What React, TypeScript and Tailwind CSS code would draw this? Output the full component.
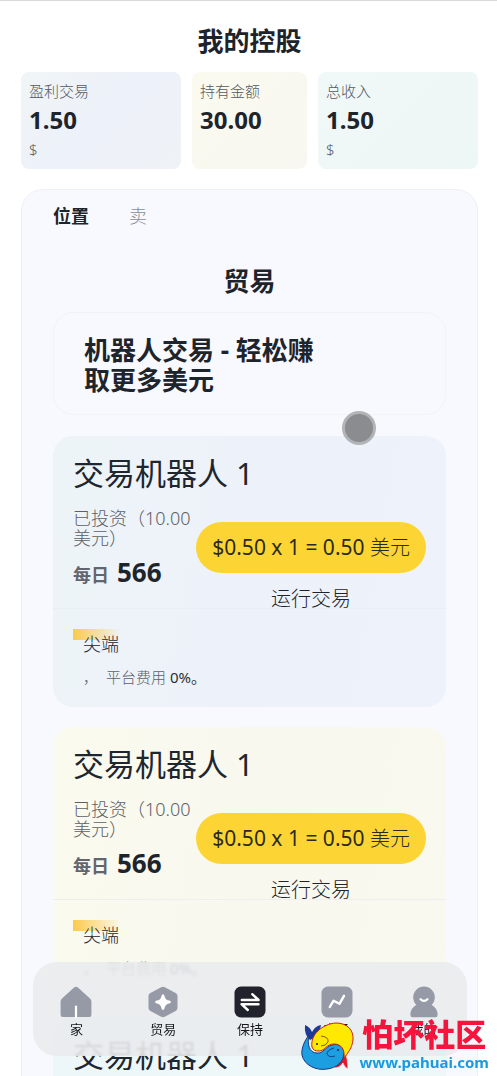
import React, { useState } from 'react';

type Stat = { label: string; value: string; unit?: string; className: string };

const stats: Stat[] = [
  { label: '盈利交易', value: '1.50', unit: '$', className: 'bg-[linear-gradient(135deg,#f0f5f7,#edf1f9_50%,#eff2f6)]' },
  { label: '持有金额', value: '30.00', className: 'bg-[linear-gradient(135deg,#fbfaef,#f8f7f1)]' },
  { label: '总收入', value: '1.50', unit: '$', className: 'bg-[linear-gradient(135deg,#f0f8f8,#edf7f5)]' },
];

const bots = [
  { id: 1, className: 'bg-[linear-gradient(100deg,#edf4f7,#edf2fa_50%,#eef2fb)]' },
  { id: 2, className: 'bg-[linear-gradient(100deg,#fafaee,#f8f8ef_50%,#f9f9f0)]' },
  { id: 3, className: 'bg-[linear-gradient(100deg,#edf7fa,#eff8f8)]' },
];

function StatCard({ label, value, unit, className }: Stat) {
  return (
    <div className={`min-w-0 rounded-lg px-2 pt-[7px] pb-2 ${className}`}>
      <p className="text-[15px] leading-6 font-light text-[#54585f]">{label}</p>
      <p className="text-2xl leading-[34px] font-bold text-[#1e242c]">{value}</p>
      {unit && <p className="text-[15px] leading-6 font-light text-[#54585f]">{unit}</p>}
    </div>
  );
}

function BotCard({ className }: { className: string }) {
  return (
    <article className={`rounded-[20px] ${className}`}>
      <div className="border-b border-[#e9ecf0]/80 px-5 pt-4">
        <h3 className="text-[31px] leading-[42px] text-[#20262f]">交易机器人 1</h3>
        <div className="flex h-[114px] items-start">
          <div className="min-w-0 flex-1 pt-3.5">
            <p className="text-lg leading-5 font-light text-[#5c6068]">已投资（10.00美元）</p>
            <p className="flex items-baseline gap-2 pt-1.5 leading-9 font-bold">
              <span className="text-lg text-[#62656e]">每日</span>
              <span className="text-[26px] text-[#1e242c]">566</span>
            </p>
          </div>
          <div className="flex flex-none flex-col items-center pt-7">
            <button type="button" className="h-[51px] rounded-full bg-[#fcd535] px-4 text-[21px] leading-none whitespace-nowrap text-[#2b2a1e]">
              $0.50 x 1 = 0.50 <span className="text-xl font-light">美元</span>
            </button>
            <button type="button" className="pt-3 text-xl leading-7 font-light text-[#1e242c]">运行交易</button>
          </div>
        </div>
      </div>
      <div className="px-5 pt-5 pb-5">
        <div className="h-[11px] w-12 bg-linear-to-r from-[#fcca4c] to-transparent" />
        <div className="-mt-2 pl-2.5">
          <p className="text-lg leading-6 font-light text-[#1e242c]">尖端</p>
          <p className="pt-[11px] text-[15px] leading-5 font-light text-[#5c6068]">
            ，<span className="pl-2">平台费用</span> <span className="font-normal text-[#2a3038]">0%。</span>
          </p>
        </div>
      </div>
    </article>
  );
}

function HomeIcon() {
  return (
    <svg viewBox="0 0 32 32" className="size-8" aria-hidden="true">
      <path d="M13.800 1.700a3.400 3.400 0 0 1 4.400 0L30 12.400q1.400 1.300 1.400 3V29a2 2 0 0 1-2 2H2.600a2 2 0 0 1-2-2V15.400q0-1.700 1.400-3z" fill="#959aa6" />
      <path d="M16 20.500V31" stroke="#fff" strokeWidth="2.200" strokeLinecap="round" />
    </svg>
  );
}

function TradeIcon() {
  return (
    <svg viewBox="0 0 32 32" className="size-8" aria-hidden="true">
      <path d="M14.200 1.300a4 4 0 0 1 3.600 0l10.800 5.600a3.500 3.500 0 0 1 1.900 3.100v12a3.500 3.500 0 0 1-1.900 3.100l-10.800 5.600a4 4 0 0 1-3.600 0L3.400 25.100A3.500 3.500 0 0 1 1.500 22V10a3.500 3.500 0 0 1 1.900-3.100z" fill="#959aa6" />
      <path d="M16 8.200q1.200 0 1.500 1.700.7 4 4.700 4.700 1.700.3 1.700 1.500t-1.700 1.500q-4 .7-4.700 4.700-.3 1.700-1.500 1.700t-1.500-1.700q-.7-4-4.700-4.700-1.700-.3-1.700-1.500t1.700-1.500q4-.7 4.700-4.700.3-1.700 1.500-1.700z" fill="#fff" />
    </svg>
  );
}

function HoldIcon() {
  return (
    <svg viewBox="0 0 32 32" className="size-8" aria-hidden="true">
      <rect x=".5" y=".5" width="31" height="31" rx="6.500" fill="#20232b" />
      <path d="M7.800 14h16.800L18.200 8.200M24.500 18.200H7.500l6.300 5.800" fill="none" stroke="#fff" strokeWidth="2.400" strokeLinecap="round" strokeLinejoin="round" />
    </svg>
  );
}

function MarketIcon() {
  return (
    <svg viewBox="0 0 32 32" className="size-8" aria-hidden="true">
      <rect x=".5" y=".5" width="31" height="31" rx="6.500" fill="#959aa6" />
      <path d="M8.800 21 12.600 14.700 18.400 17.800 23 9.800" fill="none" stroke="#fff" strokeWidth="2.400" strokeLinecap="round" strokeLinejoin="round" />
    </svg>
  );
}

function ProfileIcon() {
  return (
    <svg viewBox="0 0 32 32" className="size-8" aria-hidden="true">
      <circle cx="16" cy="11.300" r="10.800" fill="#959aa6" />
      <path d="M9 18.500q7 6 14 0 6.600 3.500 6.600 10.200 0 2.500-2 2.500H4.400q-2 0-2-2.500 0-6.700 6.600-10.200z" fill="#959aa6" />
      <path d="M12.500 13.200q3.500 3.200 7 0" fill="none" stroke="#fff" strokeWidth="2.200" strokeLinecap="round" />
    </svg>
  );
}

const navItems = [
  { label: '家', Icon: HomeIcon },
  { label: '贸易', Icon: TradeIcon },
  { label: '保持', Icon: HoldIcon },
  { label: '市场', Icon: MarketIcon },
  { label: '我的', Icon: ProfileIcon },
];

function FishLogo() {
  return (
    <svg viewBox="0 0 54 50" className="h-[50px] w-[54px] flex-none" aria-hidden="true">
      <path d="M9 18Q3 13 4 3q5 2 7 7 3-6 9-7-1 8-7 13z" fill="#1d3a98" />
      <path d="M44 30q3 7 3 17-4-2-5-6-3 5-9 5 6-5 8-13z" fill="#e5182b" stroke="#fff" strokeWidth=".6" />
      <path d="M8 13C4 18 0 26 1 33c2 10 14 16 25 14 9-1 17-7 17-16 0-6-6-10-12-8-7 2-9 9-15 8-8 0-10-9-8-18z" fill="#1c9fe0" stroke="#18357e" strokeWidth="1" />
      <path d="M11 25C9 13 21 2 35 1c11 0 18 7 17 17-1 8-5 13-9 18 1-9-3-14-10-14-8 0-9 7-15 7-4 0-6-1-7-4z" fill="#ffe900" stroke="#c4201f" strokeWidth="1" />
      <path d="M20 14q8 1 7 6-2 4-7 4" fill="none" stroke="#8a3b20" strokeWidth=".9" />
      <path d="M33 26q-7 2-7 6 2 4 8 2" fill="none" stroke="#18357e" strokeWidth=".9" />
      <circle cx="16" cy="22" r="1" fill="#222" />
      <circle cx="37" cy="28" r="1" fill="#123" />
    </svg>
  );
}

export default function App() {
  const [tab, setTab] = useState('位置');
  const [page, setPage] = useState('保持');

  return (
    <div className="relative h-dvh overflow-hidden border-t border-[#d9d9d9] bg-white font-['Noto_Sans','Noto_Sans_CJK_SC',sans-serif]">
      <main className="h-full overflow-y-auto pt-5 pr-[19px] pl-[21px] [scrollbar-width:none]">
        <h1 className="text-center text-[26px] leading-10 font-bold text-[#1d232b]">我的控股</h1>
        <section className="mt-[11px] grid h-24 grid-cols-[160fr_115fr_160fr] gap-[11px]">
          {stats.map((s) => <StatCard key={s.label} {...s} />)}
        </section>

        <section className="mt-[21px] rounded-t-[22px] border border-[#eef0f4] bg-[#f8f9fe] px-[31px] pt-3 pb-32">
          <div className="flex gap-10">
            {['位置', '卖'].map((t) => (
              <button
                key={t}
                type="button"
                onClick={() => setTab(t)}
                className={`text-lg leading-7 ${tab === t ? 'font-bold text-[#1e242c]' : 'font-light text-[#8a8d93]'}`}
              >
                {t}
              </button>
            ))}
          </div>
          <h2 className="mt-[31px] text-center text-[26px] leading-10 font-bold text-[#1e242c]">贸易</h2>
          <div className="mt-[11px] h-[103px] rounded-[20px] border border-[#f1f3f7] px-[30px] pt-[22px]">
            <p className="w-60 text-[26px] leading-[30px] font-bold text-[#1e242c]">机器人交易 - 轻松赚取更多美元</p>
          </div>
          <div className="mt-[21px] flex flex-col gap-5">
            {bots.map((b) => <BotCard key={b.id} className={b.className} />)}
          </div>
        </section>
      </main>

      <nav className="absolute right-[30px] bottom-5 left-[33px] flex h-[94px] rounded-3xl bg-[#e9ebed]/90 pt-6 backdrop-blur-[1px]">
        {navItems.map(({ label, Icon }) => (
          <button
            key={label}
            type="button"
            aria-current={page === label ? 'page' : undefined}
            onClick={() => setPage(label)}
            className="flex flex-1 flex-col items-center gap-px text-[13px] leading-5 text-[#14171c]"
          >
            <Icon />
            {label}
          </button>
        ))}
      </nav>

      <div className="pointer-events-none absolute top-[410px] left-[342px] size-[34px] rounded-full border-[3px] border-[#b3b4b8] bg-[#8b8c90]" />

      <div className="pointer-events-none absolute right-2 bottom-1 flex items-end gap-1">
        <FishLogo />
        <div className="flex flex-col items-center">
          <span className="text-[31px] leading-9 font-black text-[#f5143c]">怕坏社区</span>
          <span className="text-[15px] leading-5 font-bold text-[#1a9be0]">www.pahuai.com</span>
        </div>
      </div>
    </div>
  );
}
